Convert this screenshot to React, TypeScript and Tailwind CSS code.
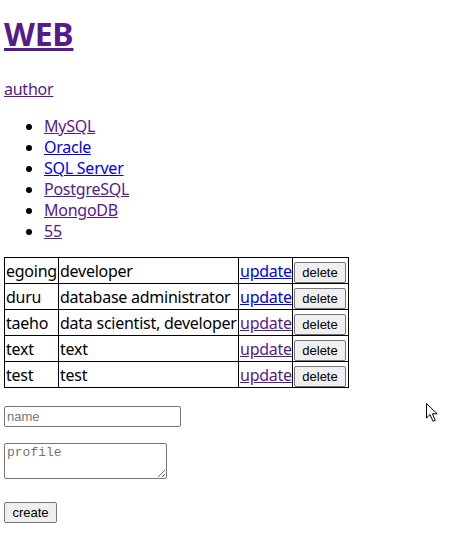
const visited = "text-[#551a8b]";
const fresh = "text-[#0000ee]";

const topics = [
  { title: "MySQL", seen: true },
  { title: "Oracle", seen: false },
  { title: "SQL Server", seen: false },
  { title: "PostgreSQL", seen: true },
  { title: "MongoDB", seen: true },
  { title: "55", seen: true },
];

const authors = [
  { name: "egoing", profile: "developer", seen: false },
  { name: "duru", profile: "database administrator", seen: false },
  { name: "taeho", profile: "data scientist, developer", seen: true },
  { name: "text", profile: "text", seen: true },
  { name: "test", profile: "test", seen: true },
];

function Cursor() {
  return (
    <svg className="absolute left-[425px] top-[402px]" width="14" height="21" viewBox="0 0 14 21">
      <path
        d="M1.5 1.5 L1.5 16 L5 12.6 L8 19.3 L10.3 18.3 L7.4 11.8 L12.2 11.8 Z"
        fill="#fff"
        stroke="#000"
        strokeWidth="1"
        strokeLinejoin="miter"
      />
    </svg>
  );
}

const cell = "border border-black px-[1px] py-0 whitespace-nowrap overflow-visible";

export default function App() {
  return (
    <div className="relative min-h-[548px] bg-white px-[4px] pt-[14px] text-[16px] text-black tracking-[-0.25px] font-['Noto_Sans',sans-serif]">
      <h1 className="text-[32px] font-bold leading-[40px]">
        <a href="#" className={`${visited} underline`}>WEB</a>
      </h1>

      <div className="mt-[25px] leading-[21px]">
        <a href="#" className={`${visited} underline`}>author</a>
      </div>

      <ul className="mt-[16px] list-disc pl-[40px] leading-[21px]">
        {topics.map((t) => (
          <li key={t.title}>
            <a href="#" className={`${t.seen ? visited : fresh} underline`}>{t.title}</a>
          </li>
        ))}
      </ul>

      <table className="mt-[15px] w-[345px] table-fixed border-collapse">
        <colgroup>
          <col className="w-[54px]" />
          <col className="w-[180px]" />
          <col className="w-[54px]" />
          <col className="w-[56px]" />
        </colgroup>
        <tbody>
          {authors.map((a) => (
            <tr key={a.name} className="h-[26px]">
              <td className={cell}>{a.name}</td>
              <td className={cell}>{a.profile}</td>
              <td className={cell}>
                <a href="#" className={`${a.seen ? visited : fresh} underline`}>update</a>
              </td>
              <td className="border border-black px-[1px] py-0 align-bottom">
                <button className="block h-[21px] w-[52px] rounded-[2px] border border-[#767676] bg-[#efefef] text-[13px] leading-none tracking-normal text-black font-['Liberation_Sans',Arial,sans-serif]">
                  delete
                </button>
              </td>
            </tr>
          ))}
        </tbody>
      </table>

      <form className="mt-[18px] flex flex-col items-start tracking-normal">
        <input
          type="text"
          placeholder="name"
          className="h-[21px] w-[177px] rounded-[2px] border border-[#767676] px-[2px] text-[13px] placeholder:text-[#757575] font-['Liberation_Sans',Arial,sans-serif] outline-none"
        />
        <textarea
          placeholder="profile"
          className="mt-[16px] h-[36px] w-[163px] rounded-[2px] border border-[#767676] px-[2px] py-[1px] text-[13px] leading-[15px] placeholder:text-[#757575] font-['Liberation_Mono',monospace] outline-none"
        />
        <button
          type="button"
          className="mt-[23px] h-[21px] w-[53px] rounded-[2px] border border-[#767676] bg-[#efefef] text-[13px] leading-none text-black font-['Liberation_Sans',Arial,sans-serif]"
        >
          create
        </button>
      </form>

      <Cursor />
    </div>
  );
}
